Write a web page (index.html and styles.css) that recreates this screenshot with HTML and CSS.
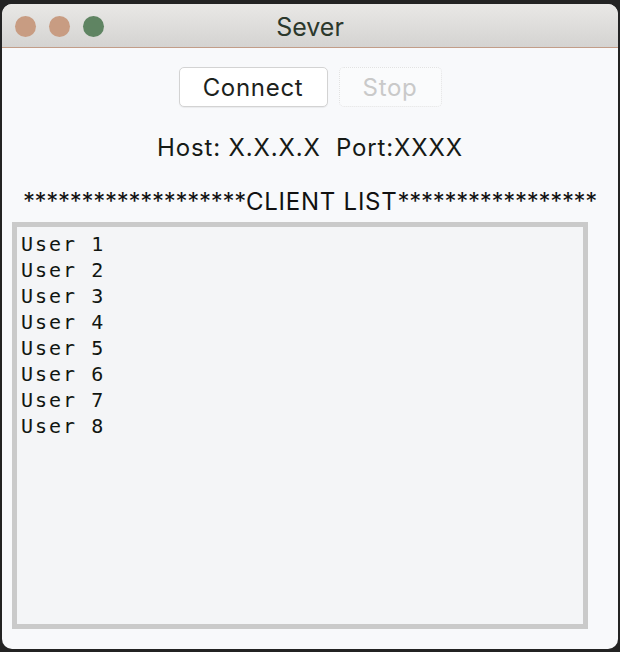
FILE: index.html
```html
<!DOCTYPE html>
<html>
<head>
<meta charset="utf-8">
<title>Sever</title>
<link rel="stylesheet" href="styles.css">
</head>
<body>
<div class="window">
  <div class="titlebar">
    <div class="lights">
      <span class="light tan"></span>
      <span class="light tan"></span>
      <span class="light green"></span>
    </div>
    <div class="title">Sever</div>
    <div></div>
  </div>
  <div class="content">
    <div class="buttons">
      <button class="btn">Connect</button>
      <button class="btn disabled">Stop</button>
    </div>
    <div class="host">Host: X.X.X.X&nbsp; Port:XXXX</div>
    <div class="header"><span class="stars">*******************</span><span class="label">CLIENT LIST</span><span class="stars">*****************</span></div>
    <div class="list">
      <div class="user">User 1</div>
      <div class="user">User 2</div>
      <div class="user">User 3</div>
      <div class="user">User 4</div>
      <div class="user">User 5</div>
      <div class="user">User 6</div>
      <div class="user">User 7</div>
      <div class="user">User 8</div>
    </div>
  </div>
</div>
</body>
</html>
```

FILE: styles.css
```css
html, body {
  margin: 0;
  padding: 0;
}
body {
  background: #232323;
  padding: 4px 2px 3px 2px;
  width: 620px;
  height: 652px;
  box-sizing: border-box;
  font-family: Inter, "Liberation Sans", sans-serif;
}
.window {
  width: 616px;
  height: 645px;
  border-radius: 10px;
  overflow: hidden;
  background: #f8f9fb;
  display: flex;
  flex-direction: column;
}
.titlebar {
  height: 43px;
  flex: none;
  background: linear-gradient(#e9e8e6, #d4d3d1);
  border-bottom: 1px solid #c29d88;
  display: grid;
  grid-template-columns: 1fr auto 1fr;
  align-items: center;
}
.lights {
  display: flex;
  gap: 13px;
  padding-left: 13px;
  padding-top: 2px;
}
.light {
  width: 21px;
  height: 21px;
  border-radius: 50%;
}
.light.tan { background: #c89c82; }
.light.green { background: #5f8462; }
.title {
  font-size: 25px;
  color: #2b382c;
  padding-top: 2px;
}
.content {
  flex: 1;
  display: flex;
  flex-direction: column;
  align-items: center;
  padding-top: 19px;
}
.buttons {
  display: flex;
  gap: 11px;
}
.btn {
  font-family: Inter, "Liberation Sans", sans-serif;
  font-size: 24px;
  letter-spacing: 0.7px;
  height: 40px;
  border-radius: 5px;
  background: #ffffff;
  border: 1px solid #d3d3d3;
  color: #1c221c;
  padding: 0;
  width: 149px;
  box-shadow: 0 1px 1px rgba(0,0,0,0.06);
}
.btn.disabled {
  width: 103px;
  color: #c9c9c9;
  border: 1px dotted #e2e2e2;
  background: #fafbfc;
  box-shadow: none;
}
.host {
  margin-top: 26px;
  font-size: 24px;
  letter-spacing: 0.85px;
  line-height: 30px;
  color: #161a16;
}
.header {
  margin-top: 24px;
  font-size: 24px;
  line-height: 30px;
  color: #111;
  white-space: nowrap;
}
.stars {
  letter-spacing: -0.28px;
}
.label {
  letter-spacing: 0.75px;
}
.list {
  margin-top: 5px;
  align-self: flex-start;
  margin-left: 10px;
  width: 576px;
  height: 407px;
  box-sizing: border-box;
  border: 5px solid #cacaca;
  background: #f4f5f7;
  padding: 4px 4px;
  font-family: "DejaVu Sans Mono", monospace;
  font-size: 20px;
  letter-spacing: 2px;
  line-height: 26px;
  color: #111611;
}
```
